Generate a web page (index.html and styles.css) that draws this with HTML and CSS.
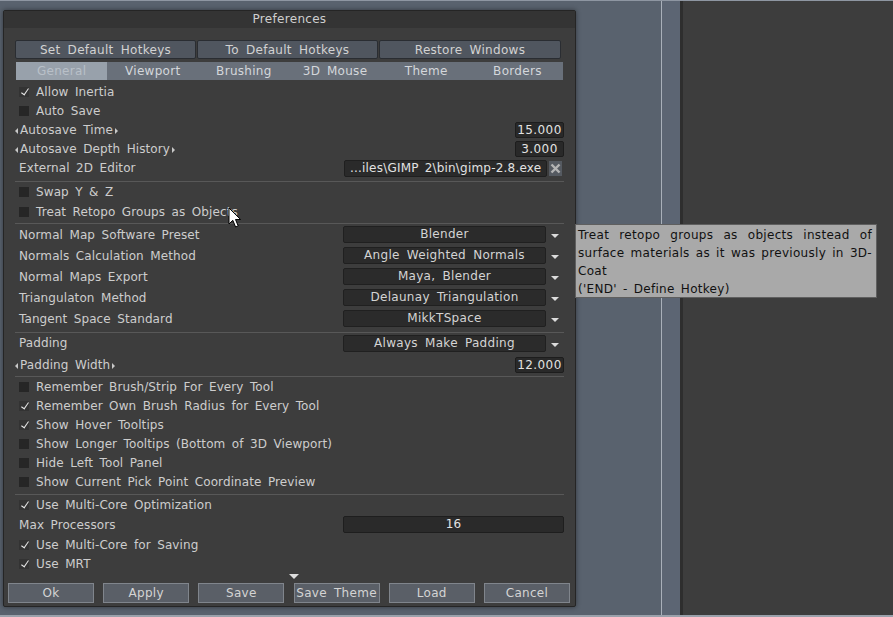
FILE: index.html
```html
<!DOCTYPE html>
<html lang="en">
<head>
  <meta charset="UTF-8" />
  <title>Preferences</title>
  <link rel="stylesheet" href="styles.css">
</head>
<body>

<div class="desk">
  <div class="dialog">
    <div class="title">Preferences</div>

    <div class="content">
      <div class="top-buttons">
        <button>Set Default Hotkeys</button>
        <button>To Default Hotkeys</button>
        <button>Restore Windows</button>
      </div>

      <div class="tabs">
        <span class="tab active">General</span>
        <span class="tab">Viewport</span>
        <span class="tab">Brushing</span>
        <span class="tab">3D Mouse</span>
        <span class="tab">Theme</span>
        <span class="tab">Borders</span>
      </div>

      <div class="row r19"><span class="check on"></span>Allow Inertia</div>
      <div class="row r19"><span class="check"></span>Auto Save</div>
      <div class="row r20"><span class="slider">Autosave Time</span><span class="value">15.000</span></div>
      <div class="row r18"><span class="slider">Autosave Depth History</span><span class="value">3.000</span></div>
      <div class="row r20">
        <span class="label">External 2D Editor</span>
        <span class="path">...iles\GIMP 2\bin\gimp-2.8.exe</span>
        <span class="clear">
          <svg width="11" height="11" viewBox="0 0 11 11"><path d="M1.5 1.5 L9.5 9.5 M9.5 1.5 L1.5 9.5" stroke="#b4b4b4" stroke-width="2.4"/></svg>
        </span>
      </div>
      <div class="sep s3"></div>
      <div class="row r20"><span class="check"></span>Swap Y &amp; Z</div>
      <div class="row r20"><span class="check"></span>Treat Retopo Groups as Objects</div>
      <div class="sep s1"></div>

      <div class="row r21"><span class="label">Normal Map Software Preset</span><span class="combo">Blender</span><span class="arrow"></span></div>
      <div class="row r21"><span class="label">Normals Calculation Method</span><span class="combo">Angle Weighted Normals</span><span class="arrow"></span></div>
      <div class="row r21"><span class="label">Normal Maps Export</span><span class="combo">Maya, Blender</span><span class="arrow"></span></div>
      <div class="row r21"><span class="label">Triangulaton Method</span><span class="combo">Delaunay Triangulation</span><span class="arrow"></span></div>
      <div class="row r21"><span class="label">Tangent Space Standard</span><span class="combo">MikkTSpace</span><span class="arrow"></span></div>
      <div class="sep s3"></div>

      <div class="row r20"><span class="label">Padding</span><span class="combo">Always Make Padding</span><span class="arrow"></span></div>
      <div class="row r20 m2"><span class="slider">Padding Width</span><span class="value">12.000</span></div>
      <div class="sep s1"></div>

      <div class="row r19"><span class="check"></span>Remember Brush/Strip For Every Tool</div>
      <div class="row r19"><span class="check on"></span>Remember Own Brush Radius for Every Tool</div>
      <div class="row r19"><span class="check on"></span>Show Hover Tooltips</div>
      <div class="row r19"><span class="check"></span>Show Longer Tooltips (Bottom of 3D Viewport)</div>
      <div class="row r19"><span class="check"></span>Hide Left Tool Panel</div>
      <div class="row r19"><span class="check"></span>Show Current Pick Point Coordinate Preview</div>
      <div class="sep s3"></div>

      <div class="row r19"><span class="check on"></span>Use Multi-Core Optimization</div>
      <div class="row r21"><span class="label">Max Processors</span><span class="bar">16</span></div>
      <div class="row r19"><span class="check on"></span>Use Multi-Core for Saving</div>
      <div class="row r19"><span class="check on"></span>Use MRT</div>

      <div class="more"><span class="more-arrow"></span></div>
    </div>

    <div class="footer">
      <button>Ok</button>
      <button>Apply</button>
      <button>Save</button>
      <button>Save Theme</button>
      <button>Load</button>
      <button>Cancel</button>
    </div>
  </div>
</div>
<div class="gutter"></div>
<div class="side"></div>

<div class="tooltip">
  Treat retopo groups as objects instead of surface materials as it was previously in 3D-Coat<br>
  ('END' - Define Hotkey)
</div>

<svg class="cursor" width="14" height="22" viewBox="0 0 14 22">
  <path d="M1 1 L1 17 L4.8 13.3 L7.6 20 L10.2 18.9 L7.5 12.5 L12.6 12.5 Z" fill="#fff" stroke="#000" stroke-width="1"/>
</svg>

</body>
</html>
```

FILE: styles.css
```css
html, body {
    margin: 0;
    padding: 0;
    height: 617px;
    overflow: hidden;
}

body {
    display: flex;
    background-color: #59626e;
    border-top: 1px solid #8e96a2;
    border-bottom: 2px solid #9aa1ab;
    box-sizing: border-box;
    font-family: "DejaVu Sans", Verdana, sans-serif;
    font-size: 12px;
    letter-spacing: 0.1px;
    word-spacing: 2.5px;
    color: #cdcdcd;
}

.desk {
    width: 662px;
    flex-shrink: 0;
    padding: 9px 0 0 3px;
    box-sizing: border-box;
    border-right: 1px solid #a9b0ba;
}

.gutter {
    width: 18px;
    background-color: #5c6573;
}

.side {
    flex: 1;
    background-color: #3d3d3d;
    border-left: 3px solid #2e2e2e;
}

.dialog {
    width: 573px;
    height: 597px;
    box-sizing: border-box;
    background-color: #3d3d3d;
    border: 1px solid #252525;
    border-radius: 2px;
    box-shadow: 0 0 5px rgba(0, 0, 0, 0.45);
    display: flex;
    flex-direction: column;
}

.title {
    height: 17px;
    line-height: 16px;
    background-color: #343434;
    text-align: center;
    color: #cfcfcf;
    letter-spacing: 0.3px;
}

.content {
    padding: 12px 11px 0 11px;
}

button {
    font-family: inherit;
    font-size: 12px;
    letter-spacing: 0.3px;
    word-spacing: 3px;
    color: #d2d2d2;
    padding: 0;
    cursor: pointer;
}

.top-buttons {
    display: grid;
    grid-template-columns: 181px 181px 182px;
    gap: 1px;
}

.top-buttons button {
    height: 19px;
    background-color: #50565f;
    border: 1px solid #2a2d32;
    border-radius: 2px;
}

.tabs {
    display: grid;
    grid-template-columns: repeat(6, 1fr);
    margin: 3px 1px 2px 1px;
    height: 18px;
    background-color: #69707a;
    line-height: 18px;
    text-align: center;
    color: #d4d7db;
    letter-spacing: 0.3px;
}

.tab.active {
    background-color: #98a1ab;
    color: #b9c0c8;
}

.row {
    display: flex;
    align-items: center;
    padding-left: 4px;
}

.r18 { height: 18px; }
.r19 { height: 19px; }
.r20 { height: 20px; }
.r21 { height: 21px; }
.m2 { margin-top: 2px; }

.check {
    width: 10px;
    height: 10px;
    margin-right: 7px;
    background-color: #262626;
    flex-shrink: 0;
    position: relative;
}

.check.on {
    background-color: #333;
}

.check.on::after {
    content: "";
    position: absolute;
    left: 4px;
    top: 0;
    width: 3px;
    height: 7px;
    border-right: 1.6px solid #e6e6e6;
    border-bottom: 1.6px solid #e6e6e6;
    transform: rotate(35deg);
}

.slider {
    position: relative;
    padding: 0 5px;
    margin-left: -4px;
}

.slider::before,
.slider::after {
    content: "";
    position: absolute;
    top: 5px;
    border-top: 3px solid transparent;
    border-bottom: 3px solid transparent;
}

.slider::before {
    left: 0;
    border-right: 3px solid #c8c8c8;
}

.slider::after {
    right: 0;
    border-left: 3px solid #c8c8c8;
}

.value {
    margin-left: auto;
    width: 49px;
    height: 16px;
    box-sizing: border-box;
    background-color: #292929;
    border: 1px solid #1d1d1d;
    border-radius: 2px;
    text-align: center;
    line-height: 14px;
    color: #e2e2e2;
    letter-spacing: 0.4px;
}

.path {
    margin-left: auto;
    width: 203px;
    height: 17px;
    box-sizing: border-box;
    background-color: #2a2a2a;
    border: 1px solid #1f1f1f;
    border-radius: 2px;
    padding-left: 5px;
    line-height: 15px;
    letter-spacing: 0.2px;
    word-spacing: 2px;
    color: #e2e2e2;
    white-space: nowrap;
    overflow: hidden;
}

.clear {
    width: 13px;
    height: 15px;
    margin: 0 2px 0 2px;
    background-color: #555a61;
    display: flex;
    align-items: center;
    justify-content: center;
}

.combo {
    margin-left: auto;
    width: 203px;
    height: 17px;
    box-sizing: border-box;
    background-color: #2b2b2b;
    border: 1px solid #202020;
    border-radius: 2px;
    text-align: center;
    line-height: 15px;
    color: #d4d4d4;
    letter-spacing: 0.3px;
    word-spacing: 3px;
}

.arrow {
    width: 18px;
    height: 17px;
    display: flex;
    align-items: center;
    justify-content: center;
}

.arrow::after {
    content: "";
    border-left: 4px solid transparent;
    border-right: 4px solid transparent;
    border-top: 4px solid #dcdcdc;
    margin-top: 3px;
}

.bar {
    margin-left: auto;
    width: 221px;
    height: 17px;
    box-sizing: border-box;
    background-color: #2a2a2a;
    border: 1px solid #1e1e1e;
    border-radius: 2px;
    text-align: center;
    line-height: 15px;
    color: #e2e2e2;
}

.sep {
    height: 1px;
    background-color: #585858;
}

.s1 { margin-top: 1px; }
.s2 { margin-top: 2px; }
.s3 { margin-top: 3px; }

.more {
    display: flex;
    justify-content: center;
    padding: 0 0 0 9px;
    height: 7px;
    align-items: center;
}

.more-arrow {
    border-left: 5px solid transparent;
    border-right: 5px solid transparent;
    border-top: 5px solid #dedede;
}

.footer {
    margin-top: auto;
    display: flex;
    justify-content: space-between;
    padding: 0 5px 3px 4px;
}

.footer button {
    width: 86px;
    height: 20px;
    background-color: #5a5f67;
    border: 1px solid #80858c;
    color: #d4d4d4;
}

.tooltip {
    position: absolute;
    left: 575px;
    top: 224px;
    width: 302px;
    height: 74px;
    box-sizing: border-box;
    background-color: #a9a9a9;
    border: 1px solid #5f5f5f;
    padding: 1px 4px 0 2px;
    line-height: 18px;
    color: #111;
    text-align: justify;
    letter-spacing: 0.3px;
    word-spacing: 2px;
}

.cursor {
    position: absolute;
    left: 228px;
    top: 207px;
}
```
